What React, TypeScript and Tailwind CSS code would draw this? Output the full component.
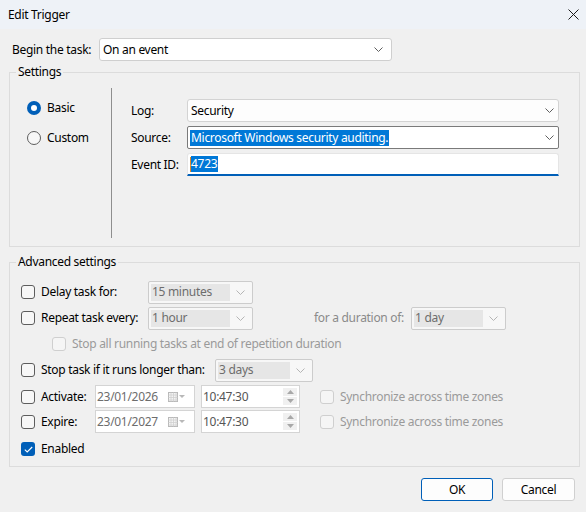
import React from "react";

function Chevron({ color = "#5f5f5f" }: { color?: string }) {
  return (
    <svg width="9" height="5" viewBox="0 0 9 5" className="shrink-0">
      <path d="M0.5 0.5 L4.5 4.5 L8.5 0.5" fill="none" stroke={color} strokeWidth="1" />
    </svg>
  );
}

function Checkbox({ checked = false, disabled = false }: { checked?: boolean; disabled?: boolean }) {
  if (checked) {
    return (
      <div className="w-[14px] h-[14px] rounded-[3px] bg-[#005fb8] flex items-center justify-center shrink-0">
        <svg width="9" height="7" viewBox="0 0 9 7">
          <path d="M0.8 3.6 L3.2 6 L8.2 1" fill="none" stroke="#ffffff" strokeWidth="1.1" />
        </svg>
      </div>
    );
  }
  return (
    <div
      className={
        disabled
          ? "w-[14px] h-[14px] rounded-[3px] border border-[#cfcfcf] bg-[#f5f5f5] shrink-0"
          : "w-[14px] h-[14px] rounded-[3px] border border-[#5d5d5d] bg-[#f7f7f7] shrink-0"
      }
    />
  );
}

function DisabledCombo({ text, className }: { text: string; className: string }) {
  return (
    <div className={"h-[23px] rounded-[2px] border border-[#cccccc] bg-[#f7f7f7] flex items-center p-[2px] " + className}>
      <div className="h-[17px] flex-1 bg-[#e6e6e6] text-[#6d6d6d] flex items-center pl-[1px] leading-none">{text}</div>
      <div className="w-[20px] flex justify-center">
        <Chevron color="#b5b5b5" />
      </div>
    </div>
  );
}

function DateBox({ text }: { text: string }) {
  return (
    <div className="w-[100px] h-[23px] border border-[#d4d4d4] bg-white flex items-center pl-[1px] pr-[8px]">
      <span className="flex-1 text-[#6d6d6d]">{text}</span>
      <svg width="18" height="10" viewBox="0 0 18 10" className="shrink-0">
        <rect x="0.5" y="0.5" width="9" height="9" fill="#f4f4f4" stroke="#b8b8b8" />
        <path d="M0.5 3 H9.5 M0.5 5.5 H9.5 M0.5 8 H9.5 M3 0.5 V9.5 M5.5 0.5 V9.5 M8 0.5 V9.5" stroke="#d0d0d0" strokeWidth="0.8" />
        <path d="M11 3 L17 3 L14 6 Z" fill="#b8b8b8" />
      </svg>
    </div>
  );
}

function TimeBox({ text }: { text: string }) {
  return (
    <div className="w-[99px] h-[23px] border border-[#d4d4d4] bg-white flex items-center pl-[1px] pr-[2px]">
      <span className="flex-1 text-[#555555]">{text}</span>
      <div className="w-[14px] flex flex-col gap-[1px]">
        <div className="h-[8px] bg-[#f0f0f0] flex items-center justify-center">
          <svg width="7" height="4" viewBox="0 0 7 4"><path d="M0 4 L3.5 0 L7 4 Z" fill="#a8a8a8" /></svg>
        </div>
        <div className="h-[8px] bg-[#f0f0f0] flex items-center justify-center">
          <svg width="7" height="4" viewBox="0 0 7 4"><path d="M0 0 L3.5 4 L7 0 Z" fill="#a8a8a8" /></svg>
        </div>
      </div>
    </div>
  );
}

export default function App() {
  return (
    <div className="w-[586px] h-[512px] bg-[#f0f0f0] overflow-hidden font-['Noto_Sans',sans-serif] text-[12px] leading-[16px] tracking-[-0.3px] text-black">
      {/* Title bar */}
      <div className="h-[29px] bg-[#eef2f7] flex items-center pl-[8px] pr-[7px]">
        <span className="flex-1">Edit Trigger</span>
        <svg width="11" height="11" viewBox="0 0 11 11">
          <path d="M0.5 0.5 L10.5 10.5 M10.5 0.5 L0.5 10.5" stroke="#1a1a1a" strokeWidth="1" />
        </svg>
      </div>

      {/* Begin the task */}
      <div className="mt-[9px] flex items-center pl-[12px] h-[23px]">
        <span className="w-[87px]">Begin the task:</span>
        <div className="w-[293px] h-[23px] rounded-[3px] border border-[#cfcfcf] bg-white flex items-center pl-[3px] pr-[8px]">
          <span className="flex-1">On an event</span>
          <Chevron />
        </div>
      </div>

      {/* Settings */}
      <fieldset className="mx-[9px] mt-[3px] h-[183px] border border-[#dcdcdc] w-[571px]">
        <legend className="ml-[6px] px-[2px] leading-[16px]">Settings</legend>
        <div className="flex pt-[8px]">
          <div className="w-[101px] pl-[17px] pt-[12px] flex flex-col gap-[14px]">
            <div className="h-[16px] flex items-center gap-[6px]">
              <div className="w-[14px] h-[14px] rounded-full bg-[#005fb8] flex items-center justify-center">
                <div className="w-[6px] h-[6px] rounded-full bg-white" />
              </div>
              <span>Basic</span>
            </div>
            <div className="h-[16px] flex items-center gap-[6px]">
              <div className="w-[14px] h-[14px] rounded-full border border-[#5d5d5d] bg-[#f7f7f7]" />
              <span>Custom</span>
            </div>
          </div>
          <div className="w-px h-[150px] bg-[#8e8e8e]" />
          <div className="pl-[19px] pt-[11px] flex flex-col gap-[4px]">
            <div className="flex items-center h-[23px]">
              <span className="w-[56px]">Log:</span>
              <div className="w-[372px] h-[23px] rounded-[3px] border border-[#d3d3d3] bg-[#fdfdfd] flex items-center pl-[3px] pr-[4px]">
                <span className="flex-1">Security</span>
                <Chevron />
              </div>
            </div>
            <div className="flex items-center h-[23px]">
              <span className="w-[56px]">Source:</span>
              <div className="w-[372px] h-[23px] rounded-[2px] border border-[#7a7a7a] bg-white flex items-center pl-[2px] pr-[4px]">
                <span className="flex-1 flex">
                  <span className="bg-[#0078d7] text-white px-[1px]">Microsoft Windows security auditing.</span>
                </span>
                <Chevron />
              </div>
            </div>
            <div className="flex items-center h-[23px]">
              <span className="w-[56px]">Event ID:</span>
              <div className="w-[372px] h-[23px] rounded-t-[3px] border border-[#e5e5e5] border-b-2 border-b-[#005fb8] bg-white flex items-center pl-[2px]">
                <span className="w-px h-[15px] bg-[#e08a2a]" />
                <span className="bg-[#0078d7] text-white pr-[1px]">4723</span>
              </div>
            </div>
          </div>
        </div>
      </fieldset>

      {/* Advanced settings */}
      <fieldset className="mx-[9px] mt-[7px] h-[213px] border border-[#dcdcdc] w-[571px]">
        <legend className="ml-[6px] px-[2px] leading-[16px]">Advanced settings</legend>
        <div className="pl-[11px] pt-[11px] flex flex-col">
          <div className="h-[22px] flex items-center">
            <Checkbox />
            <span className="ml-[6px] w-[107px]">Delay task for:</span>
            <DisabledCombo text="15 minutes" className="w-[105px]" />
          </div>
          <div className="mt-[4px] h-[22px] flex items-center">
            <Checkbox />
            <span className="ml-[6px] w-[107px]">Repeat task every:</span>
            <DisabledCombo text="1 hour" className="w-[105px]" />
            <span className="ml-[61px] w-[97px] text-[#8a8a8a]">for a duration of:</span>
            <DisabledCombo text="1 day" className="w-[95px]" />
          </div>
          <div className="mt-[4px] h-[22px] flex items-center pl-[31px]">
            <Checkbox disabled />
            <span className="ml-[6px] text-[#9a9a9a]">Stop all running tasks at end of repetition duration</span>
          </div>
          <div className="mt-[4px] h-[22px] flex items-center">
            <Checkbox />
            <span className="ml-[6px] w-[174px]">Stop task if it runs longer than:</span>
            <DisabledCombo text="3 days" className="w-[98px]" />
          </div>
          <div className="mt-[4px] h-[23px] flex items-center">
            <Checkbox />
            <span className="ml-[6px] w-[54px]">Activate:</span>
            <DateBox text="23/01/2026" />
            <div className="ml-[6px]">
              <TimeBox text="10:47:30" />
            </div>
            <div className="ml-[20px]">
              <Checkbox disabled />
            </div>
            <span className="ml-[6px] text-[#9a9a9a]">Synchronize across time zones</span>
          </div>
          <div className="mt-[2px] h-[23px] flex items-center">
            <Checkbox />
            <span className="ml-[6px] w-[54px]">Expire:</span>
            <DateBox text="23/01/2027" />
            <div className="ml-[6px]">
              <TimeBox text="10:47:30" />
            </div>
            <div className="ml-[20px]">
              <Checkbox disabled />
            </div>
            <span className="ml-[6px] text-[#9a9a9a]">Synchronize across time zones</span>
          </div>
          <div className="mt-[5px] h-[22px] flex items-center">
            <Checkbox checked />
            <span className="ml-[6px]">Enabled</span>
          </div>
        </div>
      </fieldset>

      {/* Buttons */}
      <div className="mt-[11px] flex justify-end gap-[9px] pr-[11px]">
        <button className="w-[72px] h-[23px] rounded-[3px] border border-[#005fb8] bg-[#fdfdfd] leading-none">OK</button>
        <button className="w-[73px] h-[23px] rounded-[3px] border border-[#d0d0d0] bg-[#fdfdfd] leading-none">Cancel</button>
      </div>
    </div>
  );
}
